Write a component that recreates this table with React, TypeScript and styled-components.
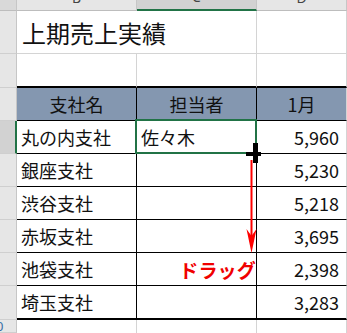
import React from 'react';
import styled, { createGlobalStyle } from 'styled-components';

const GlobalStyle = createGlobalStyle`
  html, body {
    margin: 0;
    padding: 0;
    background: #ffffff;
    overflow: hidden;
  }
  body {
    font-family: "Noto Sans CJK JP", "Noto Sans", sans-serif;
  }
`;

const GREEN = '#217346';
const GRID = '#d4d4d4';

type Line = 'none' | 'grid' | 'black' | 'thick' | 'head' | 'green';

const lineCss = (l: Line) => {
  switch (l) {
    case 'grid':
      return `1px solid ${GRID}`;
    case 'black':
      return '1px solid #000';
    case 'thick':
      return '2px solid #000';
    case 'head':
      return '1px solid #bdbdbd';
    case 'green':
      return `2px solid ${GREEN}`;
    default:
      return 'none';
  }
};

const Sheet = styled.div`
  position: relative;
  display: grid;
  grid-template-columns: 17px 120px 120px 1fr;
  grid-template-rows: 11px 43px 34px 33px repeat(5, 33px) 34px 1fr;
  width: 347px;
  height: 333px;
  overflow: hidden;
`;

const Cell = styled.div<{
  $right?: Line;
  $bottom?: Line;
  $fill?: string;
  $align?: 'left' | 'center' | 'right' | 'edge';
  $span?: number;
}>`
  box-sizing: border-box;
  display: flex;
  align-items: center;
  justify-content: ${(p) =>
    p.$align === 'center' ? 'center' : p.$align === 'right' || p.$align === 'edge' ? 'flex-end' : 'flex-start'};
  padding: ${(p) =>
    p.$align === 'right' ? '0 7px 0 0' : p.$align === 'left' || !p.$align ? '0 0 0 4px' : '0'};
  grid-column: ${(p) => (p.$span ? `span ${p.$span}` : 'auto')};
  border-right: ${(p) => lineCss(p.$right ?? 'grid')};
  border-bottom: ${(p) => lineCss(p.$bottom ?? 'grid')};
  background: ${(p) => p.$fill ?? '#ffffff'};
  font-size: 18px;
  color: #111;
  white-space: nowrap;
  min-width: 0;
`;

const ColHead = styled.div<{ $selected?: boolean; $corner?: boolean }>`
  box-sizing: border-box;
  display: flex;
  align-items: flex-end;
  justify-content: center;
  overflow: hidden;
  background: ${(p) => (p.$corner ? '#d9d9d9' : p.$selected ? '#d2d2d2' : '#e6e6e6')};
  border-right: 1px solid #c6c6c6;
  border-bottom: ${(p) => (p.$selected ? `2px solid ${GREEN}` : '1px solid #bdbdbd')};
  font-family: "Noto Sans", sans-serif;
  font-size: 14px;
  color: #444;
`;

const ColLetter = styled.span`
  line-height: 14px;
  margin-bottom: 5px;
`;

const RowHead = styled.div<{ $selected?: boolean }>`
  box-sizing: border-box;
  display: flex;
  align-items: center;
  justify-content: flex-end;
  overflow: hidden;
  background: ${(p) => (p.$selected ? '#d2d2d2' : '#e6e6e6')};
  border-right: ${(p) => (p.$selected ? `2px solid ${GREEN}` : '1px solid #c6c6c6')};
  border-bottom: 1px solid #cfcfcf;
  font-family: "Noto Sans", sans-serif;
  font-size: 13px;
  color: #3a6ea5;
`;

const RowNumber = styled.span`
  flex: 0 0 40px;
  text-align: center;
`;

const Title = styled.span`
  font-size: 24px;
  color: #111;
  padding-left: 1px;
`;

const Drag = styled.span`
  font-size: 19px;
  font-weight: 700;
  color: #f00000;
  letter-spacing: 0.2px;
`;

const Selection = styled.div`
  position: absolute;
  left: 135px;
  top: 119px;
  width: 122px;
  height: 35px;
  box-sizing: border-box;
  border: 2px solid ${GREEN};
  pointer-events: none;
`;

const Overlay = styled.svg`
  position: absolute;
  left: 0;
  top: 0;
  pointer-events: none;
`;

const rows = [
  { name: '丸の内支社', person: '佐々木', value: '5,960' },
  { name: '銀座支社', person: '', value: '5,230' },
  { name: '渋谷支社', person: '', value: '5,218' },
  { name: '赤坂支社', person: '', value: '3,695' },
  { name: '池袋支社', person: '', value: '2,398', note: 'ドラッグ' },
  { name: '埼玉支社', person: '', value: '3,283' },
];

export default function App() {
  return (
    <>
      <GlobalStyle />
      <Sheet>
        <ColHead $corner />
        <ColHead><ColLetter>B</ColLetter></ColHead>
        <ColHead $selected><ColLetter>C</ColLetter></ColHead>
        <ColHead><ColLetter>D</ColLetter></ColHead>

        <RowHead><RowNumber>1</RowNumber></RowHead>
        <Cell $span={2}><Title>上期売上実績</Title></Cell>
        <Cell />

        <RowHead><RowNumber>2</RowNumber></RowHead>
        <Cell $bottom="thick" />
        <Cell $bottom="thick" />
        <Cell $bottom="thick" />

        <RowHead><RowNumber>3</RowNumber></RowHead>
        <Cell $fill="#8497b0" $align="center" $right="black" $bottom="black">支社名</Cell>
        <Cell $fill="#8497b0" $align="center" $right="black" $bottom="black">担当者</Cell>
        <Cell $fill="#8497b0" $align="center" $bottom="black">1月</Cell>

        {rows.map((r, i) => {
          const last = i === rows.length - 1;
          const bottom: Line = last ? 'thick' : 'black';
          return (
            <React.Fragment key={r.name}>
              <RowHead $selected={i === 0}><RowNumber>{i + 4}</RowNumber></RowHead>
              <Cell $right="black" $bottom={bottom}>{r.name}</Cell>
              <Cell $right="black" $bottom={bottom} $align={r.note ? 'edge' : 'left'}>
                {r.note ? <Drag>{r.note}</Drag> : r.person}
              </Cell>
              <Cell $align="right" $bottom={bottom}>{r.value}</Cell>
            </React.Fragment>
          );
        })}

        <RowHead><RowNumber>10</RowNumber></RowHead>
        <Cell $bottom="none" />
        <Cell $bottom="none" />
        <Cell $bottom="none" />

        <Selection />
        <Overlay width={347} height={333} viewBox="0 0 347 333">
          <line x1={251.5} y1={160} x2={251.5} y2={240} stroke="#ff0000" strokeWidth={2} />
          <path d="M246.5 229 L251.5 253 L256.5 229 L251.5 236 Z" fill="#ff0000" />
          <rect x={253} y={143} width={5} height={20} fill="#000" />
          <rect x={246} y={152} width={15} height={4} fill="#000" />
        </Overlay>
      </Sheet>
    </>
  );
}
